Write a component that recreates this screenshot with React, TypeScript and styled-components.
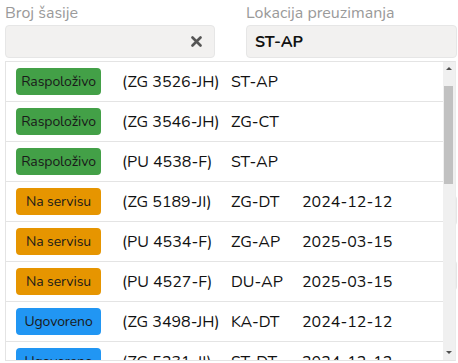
import React from "react";
import styled, { createGlobalStyle } from "styled-components";

const Global = createGlobalStyle`
  html, body { margin: 0; padding: 0; background: #fff; }
  body { font-family: "Nunito", "Lato", "Noto Sans", sans-serif; color: #222; }
  * { box-sizing: border-box; }
`;

const Page = styled.div`
  position: relative;
  padding: 4px 1px 0 5px;
  width: 458px;
  height: 363px;
  overflow: hidden;
`;

const FieldGrid = styled.div<{ $top?: number }>`
  display: grid;
  grid-template-columns: 210px 211px;
  column-gap: 31px;
  row-gap: 13px;
  margin-top: ${(p) => p.$top ?? 0}px;
`;

const Field = styled.div`
  display: flex;
  flex-direction: column;
  gap: 2px;
`;

const Label = styled.div`
  font-size: 16px;
  line-height: 19px;
  min-height: 19px;
  color: #9a9a9a;
`;

const InputBox = styled.div<{ $h?: number }>`
  height: ${(p) => p.$h ?? 33}px;
  background: #f2f1f0;
  border: 1px solid #e6e6e6;
  border-radius: 4px;
  display: flex;
  align-items: center;
  justify-content: space-between;
  padding: 0 12px 0 8px;
  font-size: 16px;
  font-weight: 700;
  color: #111;
`;

const Dropdown = styled.div`
  position: absolute;
  left: 5px;
  top: 61px;
  width: 451px;
  height: 300px;
  border: 1px solid #e4e4e4;
  border-right: 1px solid #ececec;
  background: #fff;
  display: flex;
`;

const List = styled.div`
  flex: 1;
  overflow: hidden;
`;

const Scrollbar = styled.div`
  width: 12px;
  background: #f0f0f0;
  display: flex;
  flex-direction: column;
`;

const Arrow = styled.div<{ $dir: "up" | "down" }>`
  height: 14px;
  display: flex;
  align-items: ${(p) => (p.$dir === "up" ? "flex-start" : "flex-end")};
  justify-content: center;
  padding: ${(p) => (p.$dir === "up" ? "5px 0 0" : "0 0 6px")};
  &::before {
    content: "";
    width: 0;
    height: 0;
    border-left: 3px solid transparent;
    border-right: 3px solid transparent;
    ${(p) => (p.$dir === "up" ? "border-bottom: 3px solid #505050;" : "border-top: 3px solid #505050;")}
  }
`;

const Track = styled.div`
  flex: 1;
  padding-top: 10px;
`;

const Thumb = styled.div`
  width: 9px;
  height: 98px;
  margin-left: 1px;
  background: #c1c1c1;
`;

const Row = styled.div`
  display: grid;
  grid-template-columns: 106px 109px 71px 1fr;
  align-items: center;
  height: 40px;
  padding-left: 10px;
  border-bottom: 1px solid #e4e4e4;
  font-size: 16px;
  color: #111;
`;

const colors: Record<string, string> = {
  green: "#43a047",
  orange: "#e69500",
  blue: "#2196f3",
};

const Badge = styled.span<{ $tone: string }>`
  display: inline-flex;
  align-items: center;
  justify-content: center;
  width: 85px;
  height: 27px;
  border-radius: 4px;
  background: ${(p) => colors[p.$tone]};
  color: #1a1a1a;
  font-size: 14px;
  letter-spacing: -0.1px;
  white-space: nowrap;
`;

const Cell = styled.span`
  white-space: nowrap;
`;

const XIcon = () => (
  <svg width="11" height="11" viewBox="0 0 11 11">
    <path d="M1.5 1.5 L9.5 9.5 M9.5 1.5 L1.5 9.5" stroke="#555" strokeWidth="2.6" strokeLinecap="round" />
  </svg>
);

const rows: [string, string, string, string, string][] = [
  ["green", "Raspoloživo", "(ZG 3526-JH)", "ST-AP", ""],
  ["green", "Raspoloživo", "(ZG 3546-JH)", "ZG-CT", ""],
  ["green", "Raspoloživo", "(PU 4538-F)", "ST-AP", ""],
  ["orange", "Na servisu", "(ZG 5189-JI)", "ZG-DT", "2024-12-12"],
  ["orange", "Na servisu", "(PU 4534-F)", "ZG-AP", "2025-03-15"],
  ["orange", "Na servisu", "(PU 4527-F)", "DU-AP", "2025-03-15"],
  ["blue", "Ugovoreno", "(ZG 3498-JH)", "KA-DT", "2024-12-12"],
  ["blue", "Ugovoreno", "(ZG 5231-JI)", "ST-DT", "2024-12-12"],
];

export default function App() {
  return (
    <>
      <Global />
      <Page>
        <FieldGrid>
          <Field>
            <Label>Broj šasije</Label>
            <InputBox>
              <span />
              <XIcon />
            </InputBox>
          </Field>
          <Field>
            <Label>Lokacija preuzimanja</Label>
            <InputBox>ST-AP</InputBox>
          </Field>
        </FieldGrid>
        <FieldGrid $top={116}>
          <Field>
            <Label />
            <InputBox $h={31} />
          </Field>
          <Field>
            <Label />
            <InputBox $h={31} />
          </Field>
          <Field>
            <Label />
            <InputBox $h={31} />
          </Field>
          <Field>
            <Label />
            <InputBox $h={31} />
          </Field>
        </FieldGrid>
        <Dropdown>
          <List>
            {rows.map((r, i) => (
              <Row key={i}>
                <Badge $tone={r[0]}>{r[1]}</Badge>
                <Cell>{r[2]}</Cell>
                <Cell>{r[3]}</Cell>
                <Cell>{r[4]}</Cell>
              </Row>
            ))}
          </List>
          <Scrollbar>
            <Arrow $dir="up" />
            <Track>
              <Thumb />
            </Track>
            <Arrow $dir="down" />
          </Scrollbar>
        </Dropdown>
      </Page>
    </>
  );
}
